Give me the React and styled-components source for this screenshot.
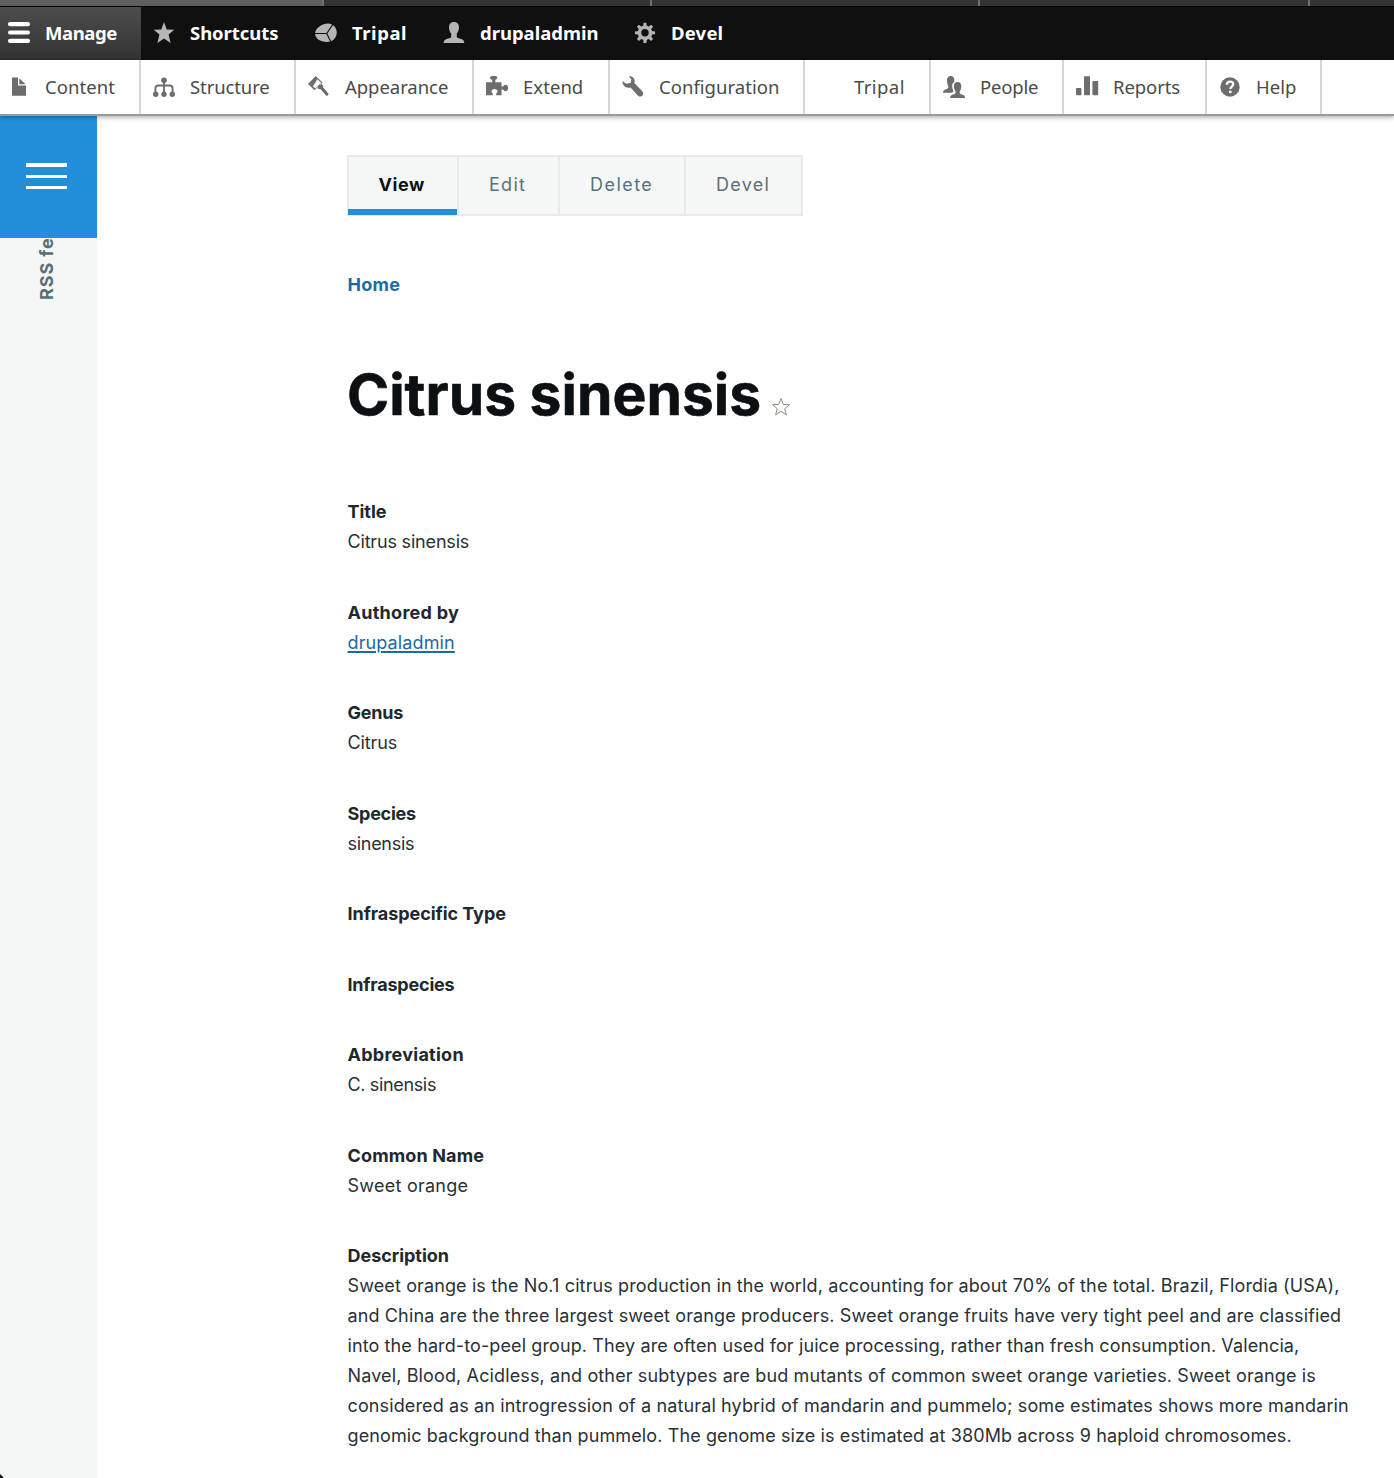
import React from 'react';
import styled, { createGlobalStyle } from 'styled-components';

const Global = createGlobalStyle`
  * { box-sizing: border-box; }
  body { margin: 0; background: #fff; font-family: Inter, "Open Sans", sans-serif; }
`;

const Page = styled.div`
  display: flex;
  flex-direction: column;
  width: 1394px;
  height: 1478px;
  overflow: hidden;
  background: #fff;
`;

/* Browser strip */
const BrowserStrip = styled.div`
  display: flex;
  flex: none;
  height: 7px;
  background: #323534;
  border-bottom: 1px solid #000;
`;
const BrowserTab = styled.div`
  width: ${p => p.$w}px;
  background: ${p => (p.$active ? '#5d605d' : '#323534')};
  border-right: 2px solid #6d706e;
`;

/* Toolbars */
const AdminBar = styled.nav`
  display: flex;
  flex: none;
  height: 53px;
  background: #101010;
`;
const Tray = styled.nav`
  display: flex;
  flex: none;
  position: relative;
  z-index: 2;
  height: 56px;
  background: #fff;
  border-bottom: 2px solid #9b9b9b;
  box-shadow: 0 1px 5px rgba(0, 0, 0, 0.38);
`;
const BarItem = styled.a`
  display: flex;
  align-items: flex-start;
  gap: 14px;
  width: ${p => p.$w}px;
  padding: 13px 0 0 ${p => (p.$first ? 7 : 11)}px;
  color: #fff;
  background: ${p => (p.$active ? 'linear-gradient(#4d4d4d, #333)' : 'transparent')};
  font: 700 18.5px/26px "Noto Sans", "Open Sans", sans-serif;
  letter-spacing: ${p => p.$ls}px;
  white-space: nowrap;
`;
const TrayItem = styled(BarItem)`
  padding-top: 15px;
  color: #4a4a4a;
  border-right: 2px solid #d6d6d6;
  font-weight: 400;
  line-height: 24px;
`;
const IconBox = styled.svg`
  flex: none;
  width: 24px;
  height: 24px;
  color: ${p => p.$color};
  fill: currentColor;
`;
const ItemLabel = styled.span`
  display: block;
`;

/* Body */
const Body = styled.div`
  display: flex;
  flex: 1;
  min-height: 0;
`;
const SideBar = styled.aside`
  position: relative;
  display: flex;
  flex-direction: column;
  align-items: center;
  flex: none;
  width: 97px;
  background: #f4f7f6;
`;
const MenuButton = styled.div`
  display: flex;
  flex-direction: column;
  gap: 8px;
  width: 97px;
  height: 122px;
  padding: 47px 30px 0 26px;
  background: #238fdb;
`;
const MenuLine = styled.span`
  height: ${p => p.$h}px;
  background: #fff;
`;
const FeedLabel = styled.div`
  width: 24px;
  height: 62px;
  margin-right: 4px;
  writing-mode: vertical-rl;
  transform: rotate(180deg);
  color: #586e78;
  font: 700 18px/24px Inter, sans-serif;
  letter-spacing: 0.9px;
  white-space: nowrap;
`;
const WindowCorner = styled.div`
  position: absolute;
  left: 0;
  bottom: 0;
  width: 4px;
  height: 4px;
  background: #111;
  clip-path: polygon(0 0, 100% 100%, 0 100%);
`;
const Main = styled.main`
  flex: 1;
  padding: 39px 0 0 250px;
`;
const Tabs = styled.div`
  display: flex;
  width: 456px;
  height: 61px;
  border: 2px solid #e7eaed;
  background: #f4f7f6;
`;
const Tab = styled.a`
  position: relative;
  width: ${p => p.$w}px;
  padding-left: ${p => (p.$active ? 29.5 : 30)}px;
  border-left: ${p => (p.$active ? 0 : '2px solid #e7eaed')};
  color: ${p => (p.$active ? '#0d1214' : '#5a707a')};
  font-size: 18px;
  line-height: 55px;
  font-weight: ${p => (p.$active ? 700 : 400)};
  letter-spacing: ${p => p.$ls}px;
  &::after {
    content: '';
    display: ${p => (p.$active ? 'block' : 'none')};
    position: absolute;
    left: -1px;
    right: 0;
    bottom: -1px;
    height: 6px;
    background: #238fdb;
  }
`;
const Breadcrumb = styled.a`
  display: block;
  margin: 53.5px 0 0 0.5px;
  color: #1b6aa3;
  font-size: 18px;
  font-weight: 700;
  line-height: 30px;
  letter-spacing: 0.25px;
`;
const TitleRow = styled.div`
  display: flex;
  align-items: flex-start;
  margin: 60.5px 0 67px 0;
`;
const PageTitle = styled.h1`
  margin: 0;
  width: 424px;
  color: #0d1012;
  font-size: 57px;
  line-height: 70px;
  font-weight: 700;
  letter-spacing: 0;
  white-space: nowrap;
  -webkit-text-stroke: 0.6px #0d1012;
`;
const StarOutline = styled.svg`
  width: 20px;
  height: 20px;
  margin-top: 37px;
  fill: none;
  stroke: #8d8a79;
  stroke-width: 1;
`;
const Field = styled.section`
  margin: 0 0 40.5px 0.5px;
  color: #283136;
  font-size: 18px;
  line-height: 30px;
`;
const FieldLabel = styled.div`
  color: #20282d;
  font-weight: 700;
  letter-spacing: ${p => p.$ls}px;
`;
const FieldLine = styled.div`
  letter-spacing: ${p => p.$ls}px;
  white-space: nowrap;
`;
const AuthorLink = styled.a`
  color: #1b6aa3;
  text-decoration: underline;
  text-decoration-thickness: 2px;
  text-underline-offset: 2px;
`;

const gearTeeth = [0, 45, 90, 135, 180, 225, 270, 315];

const icons = {
  menu: (
    <>
      <rect x="1" y="2" width="22" height="4.2" rx="2" />
      <rect x="1" y="10.4" width="22" height="4.2" rx="2" />
      <rect x="1" y="18.8" width="22" height="4.2" rx="2" />
    </>
  ),
  star: <path d="M12 2l2.7 7.4 7.6.3-5.7 4.9 2 8.4-6.6-4.4L5.4 23l2-8.4-5.7-4.9 7.6-.3z" />,
  pie: (
    <>
      <path d="M1 13.6C1.4 8 8 3.6 14 3.6c5 0 8.7 4.2 8.7 9 0 4.5-3 8-6.4 9C8 23 1.5 20 1 13.6z" />
      <path d="M.6 13.5h12.1L18.8 4.4M12.7 13.5l4 8" fill="none" stroke="#101010" strokeWidth="1.1" />
    </>
  ),
  user: <path d="M12 2c3.2 0 5 2.2 5 5.4 0 2.6-1 4.6-2.2 6.2v2.8c0 1 .8 1.5 2 1.8 3.2.8 5.5 1.7 5.500 4.700H1.700c0-3 2.300-3.900 5.500-4.700 1.200-.3 2-.8 2-1.800v-2.800C8 12 7 10 7 7.400 7 4.200 8.800 2 12 2z" />,
  gear: (
    <>
      <circle cx="12" cy="12.8" r="5.5" fill="none" stroke="currentColor" strokeWidth="3.6" />
      {gearTeeth.map(a => (
        <path key={a} d="M10.2 6.500l.4-3.800h2.800l.4 3.800z" transform={`rotate(${a} 12 12.8)`} />
      ))}
    </>
  ),
  file: <path d="M5 2.400h6v8h8v10.300H5zM12.300 3.200l6.200 6H12.300z" />,
  structure: (
    <>
      <circle cx="12" cy="5.300" r="2.800" />
      <path d="M12 6v13M3.400 19v-5.500a3 3 0 0 1 3-3h11.200a3 3 0 0 1 3 3V19" fill="none" stroke="currentColor" strokeWidth="1.900" />
      <circle cx="3.700" cy="19.300" r="2.700" />
      <circle cx="12" cy="19.300" r="2.700" />
      <circle cx="20.300" cy="19.300" r="2.700" />
    </>
  ),
  brush: (
    <>
      <path d="M8.700 1L1 9l6.500 6.200L15.600 7.600z" />
      <path d="M10.300 4.300l4 3.500-6 5.600-2.400-2z" fill="#fff" />
      <path d="M12.600 11.300l2 1.600 5.400 6.300" fill="none" stroke="currentColor" strokeWidth="3" strokeLinecap="round" />
      <path d="M10.200 13.200l4.600-4.400 1.600 2.600-3.200 3z" />
    </>
  ),
  puzzle: (
    <path d="M1 7.300h6.200V4.800C5.800 4.500 5 3.800 5 2.500 5 1.500 6 1 8.700 1s3.600.5 3.600 1.500c0 1.300-.8 2-2 2.300v2.500h6.200v4.300h1.600c.4-1.200 1.400-1.800 2.500-1.800 1.600 0 2.500 1.300 2.500 3.200s-.9 3.200-2.500 3.200c-1.100 0-2.100-.6-2.500-1.800h-1.600v5.900h-5.300v-1.900c1-.6 1.300-1.300 1.300-2 0-1.400-1.400-2.300-3-2.300s-3 .9-3 2.300c0 .7.300 1.400 1.300 2v1.900H1z" />
  ),
  wrench: <path d="M7.800 1.200c2.400-.4 4.700.9 5.500 3.100.5 1.300.4 2.600.1 3.700l7.900 8.300c1.200 1.300 1.200 3 .2 4.300-1.200 1.300-3.200 1.300-4.400.1l-7.600-8.300c-3.200.9-6.400-.4-7.600-3.400-.4-1-.5-2-.3-3.100l3.500 2.900 4.500-.8.800-3.500z" />,
  people: (
    <>
      <path d="M8.700 1c2.400 0 3.700 1.700 3.700 4.200 0 .7-.1 1.300-.3 1.900-1.700 1.100-2.100 2.900-1.900 4.900.1 1.200.4 2.200.9 3.100l.4 1.500c-.4.7-1 .9-2.400 1.200H1c0-2.600 1.600-3.200 3.800-3.900 1.200-.4 1.700-1 1.700-2.200C5.600 10.300 5 8.200 5 5.500 5 2.700 6.300 1 8.700 1z" />
      <path d="M15.500 7c2.400 0 3.800 1.600 3.800 4.200 0 2.100-.7 3.800-1.600 5v1.600c0 .8.500 1.200 1.500 1.500 2.400.6 4 1.200 4 3.700H8c0-2.500 1.600-3.100 4-3.700 1-.3 1.500-.7 1.500-1.500v-1.600c-1-1.200-1.700-2.900-1.700-5C11.800 8.600 13.200 7 15.500 7z" />
    </>
  ),
  chart: (
    <>
      <rect x="1" y="13" width="5.400" height="7.300" rx=".8" />
      <rect x="9" y="1.200" width="6" height="19.100" rx=".8" />
      <rect x="17.400" y="6" width="5.800" height="14.300" rx=".8" />
    </>
  ),
  help: (
    <>
      <circle cx="12" cy="12" r="9.700" />
      <path d="M8.900 9.700c0-2 1.300-3 3.200-3 1.800 0 3.100 1 3.100 2.600 0 2.200-2.900 2.300-2.900 4.700" fill="none" stroke="#fff" strokeWidth="2.300" />
      <rect x="11" y="15.700" width="2.600" height="2.400" fill="#fff" />
    </>
  ),
};

const Icon = ({ name, color }) => (
  <IconBox viewBox="0 0 24 24" $color={color}>{icons[name]}</IconBox>
);

const barItems = [
  { label: 'Manage', icon: 'menu', w: 141, ls: -0.42 },
  { label: 'Shortcuts', icon: 'star', w: 162, ls: -0.06 },
  { label: 'Tripal', icon: 'pie', w: 128, ls: 0.55 },
  { label: 'drupaladmin', icon: 'user', w: 191, ls: -0.02 },
  { label: 'Devel', icon: 'gear', w: 130, ls: 0.2 },
];

const trayItems = [
  { label: 'Content', icon: 'file', w: 141, ls: 0.05 },
  { label: 'Structure', icon: 'structure', w: 155, ls: -0.1 },
  { label: 'Appearance', icon: 'brush', w: 178, ls: -0.05 },
  { label: 'Extend', icon: 'puzzle', w: 136, ls: 0.05 },
  { label: 'Configuration', icon: 'wrench', w: 195, ls: 0.03 },
  { label: 'Tripal', icon: 'none', w: 126, ls: 0.43 },
  { label: 'People', icon: 'people', w: 133, ls: -0.2 },
  { label: 'Reports', icon: 'chart', w: 143, ls: -0.08 },
  { label: 'Help', icon: 'help', w: 115, ls: 0 },
];

const tabs = [
  { label: 'View', w: 108, ls: 0.55, active: true },
  { label: 'Edit', w: 101, ls: 1.3 },
  { label: 'Delete', w: 126, ls: 1.45 },
  { label: 'Devel', w: 117, ls: 1.3 },
];

const fields = [
  { label: 'Title', ls: -0.05, lines: [['Citrus sinensis', -0.18]] },
  { label: 'Authored by', ls: 0.28, link: true, lines: [['drupaladmin', 0.12]] },
  { label: 'Genus', ls: -0.25, lines: [['Citrus', -0.1]] },
  { label: 'Species', ls: -0.25, lines: [['sinensis', -0.28]] },
  { label: 'Infraspecific Type', ls: -0.06, lines: [] },
  { label: 'Infraspecies', ls: -0.2, lines: [] },
  { label: 'Abbreviation', ls: 0.26, lines: [['C. sinensis', -0.35]] },
  { label: 'Common Name', ls: 0.14, lines: [['Sweet orange', 0.25]] },
  {
    label: 'Description',
    ls: -0.03,
    lines: [
      ['Sweet orange is the No.1 citrus production in the world, accounting for about 70% of the total. Brazil, Flordia (USA),', 0.122],
      ['and China are the three largest sweet orange producers. Sweet orange fruits have very tight peel and are classified', 0.13],
      ['into the hard-to-peel group. They are often used for juice processing, rather than fresh consumption. Valencia,', 0.11],
      ['Navel, Blood, Acidless, and other subtypes are bud mutants of common sweet orange varieties. Sweet orange is', 0.13],
      ['considered as an introgression of a natural hybrid of mandarin and pummelo; some estimates shows more mandarin', 0.129],
      ['genomic background than pummelo. The genome size is estimated at 380Mb across 9 haploid chromosomes.', 0.108],
    ],
  },
];

export default function App() {
  return (
    <Page>
      <Global />
      <BrowserStrip>
        <BrowserTab $w={324} $active />
        <BrowserTab $w={328} />
        <BrowserTab $w={328} />
        <BrowserTab $w={330} />
      </BrowserStrip>
      <AdminBar>
        {barItems.map((it, i) => (
          <BarItem key={it.label} $w={it.w} $ls={it.ls} $first={i === 0} $active={i === 0}>
            <Icon name={it.icon} color={i === 0 ? '#fff' : '#b5b5b5'} />
            <ItemLabel>{it.label}</ItemLabel>
          </BarItem>
        ))}
      </AdminBar>
      <Tray>
        {trayItems.map((it, i) => (
          <TrayItem key={it.label} $w={it.w} $ls={it.ls} $first={i === 0}>
            <Icon name={it.icon} color="#6d6d6d" />
            <ItemLabel>{it.label}</ItemLabel>
          </TrayItem>
        ))}
      </Tray>
      <Body>
        <SideBar>
          <MenuButton>
            <MenuLine $h={4} />
            <MenuLine $h={3} />
            <MenuLine $h={3} />
          </MenuButton>
          <FeedLabel>RSS fe</FeedLabel>
          <WindowCorner />
        </SideBar>
        <Main>
          <Tabs>
            {tabs.map(t => (
              <Tab key={t.label} $w={t.w} $ls={t.ls} $active={t.active}>{t.label}</Tab>
            ))}
          </Tabs>
          <Breadcrumb>Home</Breadcrumb>
          <TitleRow>
            <PageTitle>Citrus sinensis</PageTitle>
            <StarOutline viewBox="0 0 20 20">
              <path d="M10 1.500l2.300 5.900 6.200.3-4.800 4 1.700 6.100-5.400-3.500-5.400 3.500 1.700-6.100-4.800-4 6.200-.3z" strokeLinejoin="round" />
            </StarOutline>
          </TitleRow>
          {fields.map(f => (
            <Field key={f.label}>
              <FieldLabel $ls={f.ls}>{f.label}</FieldLabel>
              {f.lines.map(([text, ls]) => (
                <FieldLine key={text} $ls={ls}>
                  {f.link ? <AuthorLink>{text}</AuthorLink> : text}
                </FieldLine>
              ))}
            </Field>
          ))}
        </Main>
      </Body>
    </Page>
  );
}
